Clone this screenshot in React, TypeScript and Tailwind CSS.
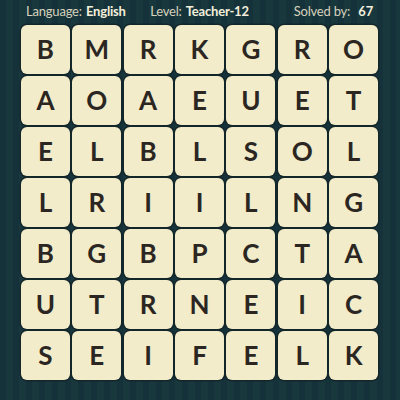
import React from "react";

const rows = [
  "BMRKGRO",
  "AOAEUET",
  "ELBLSOL",
  "LRIILNG",
  "BGBPCTA",
  "UTRNEIC",
  "SEIFELK",
];

export default function App() {
  return (
    <div
      className="w-[400px] h-[400px] overflow-hidden bg-[repeating-linear-gradient(90deg,#15313a_0px,#15313a_6px,#19383e_6px,#19383e_13px)] bg-[#173539]"
      style={{ fontFamily: "Lato, 'Open Sans', sans-serif" }}
    >
      <div className="grid grid-cols-[1fr_auto_1fr] items-center h-[25px] pl-[26px] pr-[27px] pb-[2px] text-[13px] tracking-[-0.2px] text-[#d6d2bc]">
        <div className="justify-self-start">
          Language: <span className="font-bold text-[#f3efdb] ml-[1px]">English</span>
        </div>
        <div>
          Level: <span className="font-bold text-[#f3efdb] ml-[1px]">Teacher-12</span>
        </div>
        <div className="justify-self-end">
          Solved by: <span className="font-bold text-[#f3efdb] ml-[5px]">67</span>
        </div>
      </div>
      <div className="ml-[21px] w-[357px] grid grid-cols-7 gap-[2.5px]">
        {rows.flatMap((r, i) =>
          r.split("").map((ch, j) => (
            <div
              key={`${i}-${j}`}
              className="h-[48.5px] rounded-[6px] bg-[#f2ecca] shadow-[0_0_0_1.5px_#13272b] flex items-center justify-center text-[26px] font-bold text-[#2b2622] leading-none"
            >
              {ch}
            </div>
          ))
        )}
      </div>
    </div>
  );
}
